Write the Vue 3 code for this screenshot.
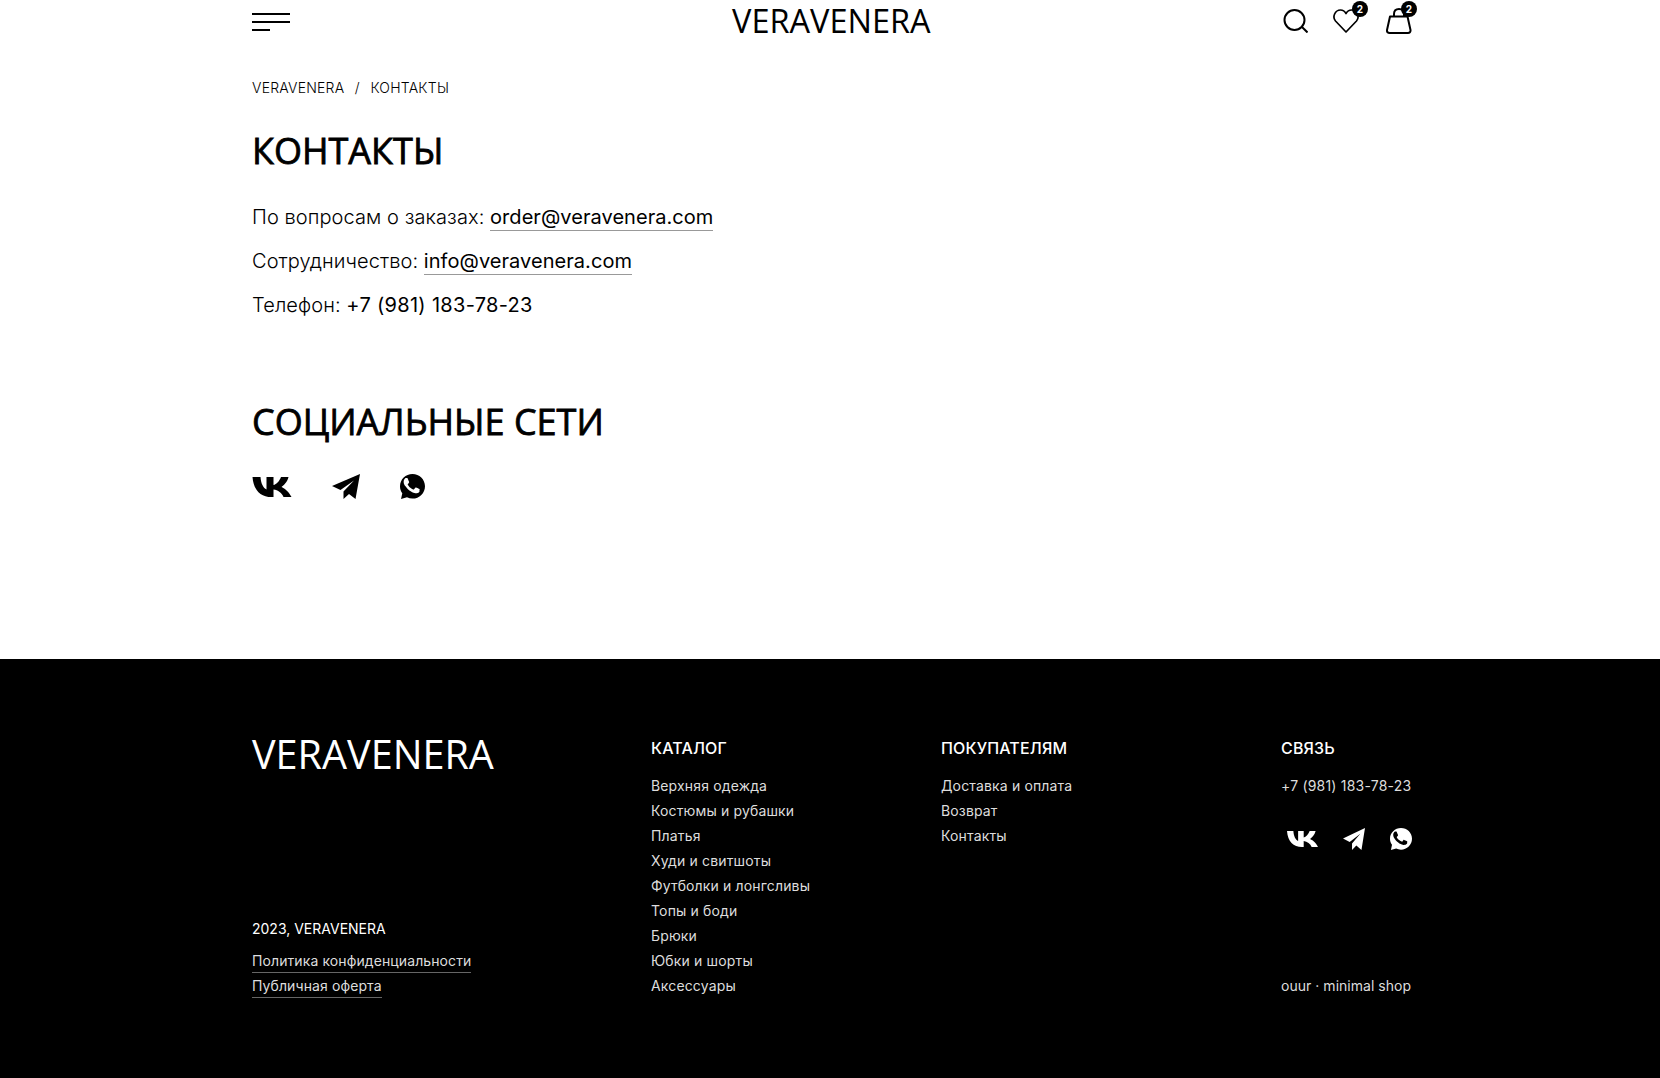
<script setup>
const catalog = [
  'Верхняя одежда',
  'Костюмы и рубашки',
  'Платья',
  'Худи и свитшоты',
  'Футболки и лонгсливы',
  'Топы и боди',
  'Брюки',
  'Юбки и шорты',
  'Аксессуары'
]
const buyers = ['Доставка и оплата', 'Возврат', 'Контакты']
const vk = 'M0 0h8c.5 7 3 11 6 12.500V0h7v8c3-.5 6-4 7.500-8H36c-1 5-5 8.500-7 10 2.500 1 7 4 10 10h-8c-1.500-4-5.500-7-10-7.500V20h-2C8 20 1 13 0 0z'
const tg = 'M28 0 0 12l8.500 4L22 6.500 11.500 17.500V25l5.500-5 6.500 5z'
const wa = 'M12 0C5.400 0 0 5.200 0 11.700c0 2.500.8 4.800 2.200 6.700L1 24l5.700-1.600c1.600.8 3.400 1.200 5.300 1.200 6.600 0 12-5.300 12-11.900S18.600 0 12 0zm6.800 16.700c-.3.800-1.600 1.600-2.500 1.700-.7.100-1.500.1-2.400-.2-.6-.2-1.300-.4-2.200-.8-3.900-1.700-6.400-5.500-6.600-5.800-.2-.3-1.600-2.100-1.600-4s1-2.800 1.300-3.200c.4-.4.800-.5 1-.5h.8c.3 0 .6 0 .9.600.3.800 1.100 2.700 1.200 2.900.1.200.2.400 0 .700-.4.800-.8 1-1.100 1.400-.2.200-.3.400-.1.800.2.400 1 1.600 2.100 2.600 1.500 1.300 2.700 1.700 3.100 1.900.4.200.6.100.8-.1.300-.3.900-1.100 1.200-1.500.2-.4.500-.3.800-.2.300.1 2.200 1 2.600 1.200.4.200.6.300.7.500.1.100.1.800-.2 1.600z'
</script>

<template>
  <div class="page">
    <header class="container header">
      <button class="burger" aria-label="Меню"><span></span><span></span><span class="short"></span></button>
      <a class="logo">VERAVENERA</a>
      <div class="actions">
        <svg width="25" height="24" viewBox="0 0 25 24" fill="none" stroke="#000" stroke-width="2">
          <circle cx="11.500" cy="11" r="10" />
          <path d="M19 18l5.500 5.500" />
        </svg>
        <div class="action">
          <svg width="26" height="24" viewBox="0 0 26 24" fill="none" stroke="#000" stroke-width="1.700" stroke-linejoin="round">
            <path d="M13 23 2.500 12C-1 8 2 1 7.500 1c2.500 0 4.300 1.300 5.500 3.500C14.200 2.300 16 1 18.500 1 24 1 27 8 23.500 12z" />
          </svg>
          <span class="badge badge-heart">2</span>
        </div>
        <div class="action action-bag">
          <svg width="26" height="26" viewBox="0 0 26 26" fill="none" stroke="#000" stroke-width="2" stroke-linejoin="round">
            <path d="M4 8.500h17.500l3 13.500c.3 2-1 3-2.500 3H3.500C2 25 .7 24 1 22z" />
            <path d="M8 8.500V6c0-3 2-5 5-5s5 2 5 5v2.500" />
          </svg>
          <span class="badge badge-bag">2</span>
        </div>
      </div>
    </header>

    <main class="container main">
      <div class="crumbs"><a>VERAVENERA</a><span class="sep">/</span><a>КОНТАКТЫ</a></div>
      <h1>КОНТАКТЫ</h1>
      <p>По вопросам о заказах: <a class="mail">order@veravenera.com</a></p>
      <p>Сотрудничество: <a class="mail">info@veravenera.com</a></p>
      <p>Телефон: <a class="phone">+7 (981) 183-78-23</a></p>
      <h2>СОЦИАЛЬНЫЕ СЕТИ</h2>
      <div class="socials">
        <svg width="40" height="20" viewBox="0 0 39 20"><path :d="vk" /></svg>
        <svg width="28" height="25" viewBox="0 0 28 25"><path :d="tg" /></svg>
        <svg width="25" height="25" viewBox="0 0 24 24"><path :d="wa" /></svg>
      </div>
    </main>

    <footer class="footer">
      <div class="container footer-grid">
        <div class="col-brand">
          <div class="footer-logo">VERAVENERA</div>
          <div class="legal">
            <div class="copy">2023, VERAVENERA</div>
            <a class="line">Политика конфиденциальности</a>
            <a class="line">Публичная оферта</a>
          </div>
        </div>
        <div class="col-catalog">
          <h3>КАТАЛОГ</h3>
          <a v-for="item in catalog" :key="item">{{ item }}</a>
        </div>
        <div class="col-buyers">
          <h3>ПОКУПАТЕЛЯМ</h3>
          <a v-for="item in buyers" :key="item">{{ item }}</a>
        </div>
        <div class="col-contact">
          <div>
            <h3>СВЯЗЬ</h3>
            <a class="contact-phone">+7 (981) 183-78-23</a>
            <div class="footer-socials">
              <svg width="31" height="16" viewBox="0 0 39 20" preserveAspectRatio="none"><path :d="vk" /></svg>
              <svg width="22" height="22" viewBox="0 0 28 25" preserveAspectRatio="none"><path :d="tg" /></svg>
              <svg width="22" height="22" viewBox="0 0 24 24"><path :d="wa" /></svg>
            </div>
          </div>
          <a class="credit">ouur · minimal shop</a>
        </div>
      </div>
    </footer>
  </div>
</template>

<style>
html, body {
  margin: 0;
  background: #fff;
}
</style>

<style scoped>
.page {
  font-family: Inter, "Liberation Sans", sans-serif;
  color: #000;
}
.container {
  width: 1160px;
  margin-left: 252px;
}
.header {
  height: 42px;
  display: flex;
  align-items: center;
  justify-content: space-between;
  position: relative;
}
.burger {
  width: 38px;
  height: 18px;
  margin-top: 2px;
  padding: 0;
  border: 0;
  background: none;
  display: flex;
  flex-direction: column;
  justify-content: space-between;
}
.burger span {
  display: block;
  height: 2px;
  width: 38px;
  background: #000;
}
.burger .short {
  width: 18px;
}
.logo {
  font-family: "Open Sans", sans-serif;
  font-size: 32.5px;
  font-weight: 400;
  line-height: 46px;
  position: absolute;
  left: 480px;
}
.actions {
  display: flex;
  align-items: center;
  gap: 25px;
}
.action {
  position: relative;
  display: flex;
}
.action-bag {
  margin-left: 2px;
}
.badge {
  position: absolute;
  width: 16px;
  height: 16px;
  border-radius: 50%;
  background: #000;
  color: #fff;
  font-size: 10px;
  font-weight: 700;
  line-height: 16px;
  text-align: center;
}
.badge-heart {
  top: -8px;
  right: -9px;
}
.badge-bag {
  top: -7px;
  right: -5px;
}
.main {
  height: 617px;
  padding-top: 37px;
  box-sizing: border-box;
}
.crumbs {
  font-size: 14px;
  font-weight: 300;
  line-height: 18px;
  letter-spacing: 0.22px;
  margin-bottom: 32px;
}
.sep {
  margin: 0 10.500px;
}
h1, h2 {
  font-family: "Open Sans", sans-serif;
  font-size: 36px;
  font-weight: 400;
  -webkit-text-stroke: 0.8px #000;
  line-height: 44px;
  margin: 0;
}
h1 {
  margin-bottom: 30px;
}
p {
  font-size: 20px;
  font-weight: 300;
  line-height: 28px;
  letter-spacing: 0.08px;
  margin: 0 0 16px;
}
.mail {
  font-weight: 400;
  letter-spacing: 0.05px;
  padding-bottom: 1px;
  border-bottom: 1px solid #999;
}
.phone {
  font-weight: 400;
  letter-spacing: 0.3px;
}
h2 {
  margin-top: 81px;
  margin-bottom: 30px;
}
.socials {
  display: flex;
  align-items: center;
  gap: 40px;
}
.footer {
  background: #000;
  color: #fff;
  height: 419px;
  padding-top: 73px;
  box-sizing: border-box;
}
.footer-grid {
  display: grid;
  grid-template-columns: 399px 290px 340px 131px;
  height: 266px;
  font-size: 14px;
  line-height: 25px;
}
.footer-grid a {
  display: block;
  color: #ddd;
  letter-spacing: 0.15px;
}
h3 {
  font-size: 16px;
  font-weight: 500;
  letter-spacing: 0.15px;
  line-height: 20px;
  margin: 6px 0 15px;
}
.col-brand, .col-contact {
  display: flex;
  flex-direction: column;
  justify-content: space-between;
}
.footer-logo {
  font-family: "Open Sans", sans-serif;
  font-size: 39.600px;
  font-weight: 400;
  line-height: 44px;
}
.copy {
  color: #fff;
  margin-bottom: 10px;
}
.footer-grid .line {
  width: fit-content;
  line-height: 19px;
  padding-bottom: 2px;
  margin-top: 3px;
  letter-spacing: 0.1px;
  border-bottom: 1px solid #666;
}
.footer-grid .contact-phone {
  letter-spacing: 0.2px;
}
.footer-socials {
  display: flex;
  align-items: center;
  gap: 25px;
  margin: 30px 0 0 6px;
}
.footer-socials path {
  fill: #fff;
}
.footer-grid .credit {
  white-space: nowrap;
  letter-spacing: 0.03px;
}
</style>
